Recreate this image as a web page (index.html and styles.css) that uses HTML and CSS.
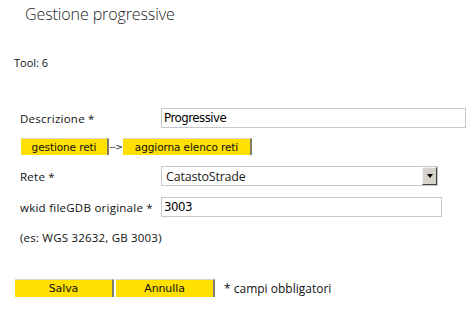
FILE: index.html
```html
<!DOCTYPE html>
<html>
<head>
<meta charset="utf-8">
<link rel="stylesheet" href="styles.css">
</head>
<body>
<div class="page">
  <h1 class="title">Gestione progressive</h1>
  <div class="tool">Tool: 6</div>
  <form class="form">
    <div class="row row-desc">
      <label class="label">Descrizione *</label>
      <div class="input input-wide">Progressive</div>
    </div>
    <div class="btnrow">
      <span class="btn btn-gest">gestione reti</span>
      <span class="arrow">--&gt;</span>
      <span class="btn btn-agg">aggiorna elenco reti</span>
    </div>
    <div class="row row-rete">
      <label class="label">Rete *</label>
      <div class="select">
        <span class="select-text">CatastoStrade</span>
        <span class="select-btn"><span class="tri"></span></span>
      </div>
    </div>
    <div class="row row-wkid">
      <label class="label">wkid fileGDB originale *</label>
      <div class="input input-mid">3003</div>
    </div>
    <div class="hint">(es: WGS 32632, GB 3003)</div>
    <div class="actions">
      <span class="btn btn-save">Salva</span>
      <span class="btn btn-cancel">Annulla</span>
      <span class="req">* campi obbligatori</span>
    </div>
  </form>
</div>
</body>
</html>
```
FILE: styles.css
```css
html, body {
  margin: 0;
  padding: 0;
  background: #ffffff;
}
body {
  font-family: "Open Sans", "Liberation Sans", sans-serif;
  font-size: 11px;
  color: #111;
}
.page {
  padding-top: 4px;
}
.title {
  margin: 0 0 0 25px;
  font-size: 16px;
  line-height: 20px;
  font-weight: 300;
  color: #222;
  letter-spacing: -0.1px;
}
.tool {
  margin: 31px 0 0 14px;
  line-height: 16px;
}
.form {
  margin: 37px 0 0 20px;
  display: flex;
  flex-direction: column;
}
.row {
  display: flex;
  align-items: center;
  height: 20px;
}
.label {
  width: 141px;
  flex: none;
  font-size: 11.5px;
  letter-spacing: 0.25px;
}
.input {
  box-sizing: border-box;
  height: 20px;
  border: 1px solid #c8c8c8;
  font-family: "DejaVu Sans", Verdana, sans-serif;
  font-size: 11.8px;
  line-height: 18px;
  padding-left: 2px;
  letter-spacing: -0.5px;
  color: #000;
}
.input-wide { width: 305px; }
.input-mid { width: 281px; }
.btnrow {
  display: flex;
  align-items: center;
  margin-top: 10px;
  height: 17px;
}
.btn {
  box-sizing: border-box;
  height: 17px;
  background: #ffe000;
  border-top: 1px solid #d8d8c8;
  border-right: 2px solid #807c6a;
  font-family: "DejaVu Sans", Verdana, sans-serif;
  font-size: 10.5px;
  line-height: 17px;
  text-align: center;
  color: #111;
  letter-spacing: -0.1px;
  display: inline-block;
}
.btn-gest { width: 88px; margin-left: 1px; }
.arrow {
  font-family: "DejaVu Sans", Verdana, sans-serif;
  font-size: 9px;
  width: 14px;
  text-align: center;
  letter-spacing: -0.5px;
}
.btn-agg { width: 129px; }
.row-rete { margin-top: 11px; }
.select {
  box-sizing: border-box;
  width: 277px;
  height: 20px;
  border: 1px solid #c8c8c8;
  display: flex;
  align-items: center;
  justify-content: space-between;
}
.select-text {
  font-family: "Open Sans", sans-serif;
  font-size: 12.5px;
  padding-left: 4px;
  color: #222;
  letter-spacing: -0.2px;
}
.select-btn {
  box-sizing: border-box;
  width: 15px;
  height: 18px;
  background: #d6d3cc;
  border-top: 1px solid #f4f4f0;
  border-left: 1px solid #f4f4f0;
  border-right: 1px solid #404040;
  border-bottom: 1px solid #404040;
  display: flex;
  align-items: center;
  justify-content: center;
}
.tri {
  width: 0;
  height: 0;
  border-left: 3.5px solid transparent;
  border-right: 3.5px solid transparent;
  border-top: 4px solid #000;
}
.row-wkid { margin-top: 11px; }
.hint {
  margin-top: 12px;
  line-height: 18px;
  font-size: 11.5px;
  letter-spacing: 0.2px;
}
.actions {
  display: flex;
  align-items: center;
  margin: 32px 0 0 -5px;
  height: 18px;
}
.btn-save { width: 99px; height: 18px; line-height: 18px; font-size: 11px; }
.btn-cancel { width: 99px; height: 18px; line-height: 18px; font-size: 11px; margin-left: 2px; }
.req {
  margin-left: 9px;
  font-size: 12px;
}
```
